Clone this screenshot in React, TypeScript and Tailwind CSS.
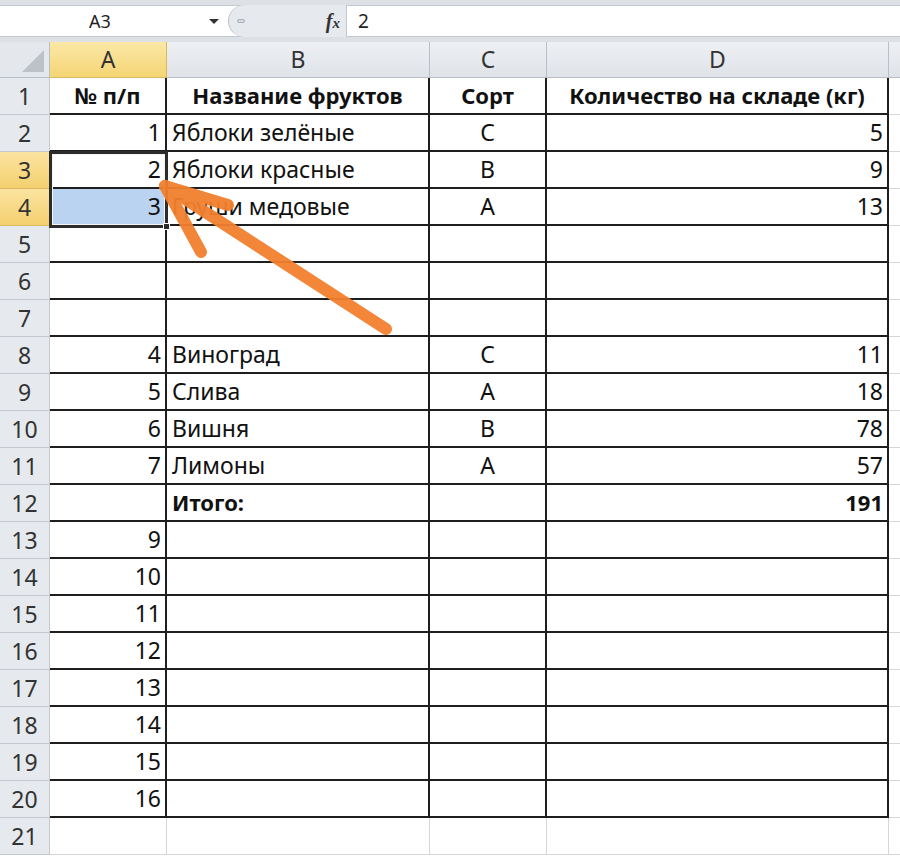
import React from 'react';

type Row = { a?: string; b?: string; c?: string; d?: string; bold?: boolean };

const rows: Row[] = [
  { a: '№ п/п', b: 'Название фруктов', c: 'Сорт', d: 'Количество на складе (кг)', bold: true },
  { a: '1', b: 'Яблоки зелёные', c: 'С', d: '5' },
  { a: '2', b: 'Яблоки красные', c: 'В', d: '9' },
  { a: '3', b: 'Груши медовые', c: 'А', d: '13' },
  {},
  {},
  {},
  { a: '4', b: 'Виноград', c: 'С', d: '11' },
  { a: '5', b: 'Слива', c: 'А', d: '18' },
  { a: '6', b: 'Вишня', c: 'В', d: '78' },
  { a: '7', b: 'Лимоны', c: 'А', d: '57' },
  { b: 'Итого:', d: '191', bold: true },
  { a: '9' },
  { a: '10' },
  { a: '11' },
  { a: '12' },
  { a: '13' },
  { a: '14' },
  { a: '15' },
  { a: '16' },
];

const font = { fontFamily: '"Noto Sans", "Open Sans", sans-serif' };

const App: React.FC = () => {
  const tableCell = 'h-[37px] border-b-2 border-r-2 border-[#1e1e1e] flex items-center text-[#111] overflow-hidden whitespace-nowrap';
  const emptyCell = 'h-[37px] border-b border-r border-[#d6d6d6]';

  return (
    <div className="w-[900px] h-[856px] overflow-hidden bg-white" style={font}>
      {/* Formula bar */}
      <div className="h-[42px] bg-[#dde1e6] pt-[5px] pb-[5px]">
        <div className="h-[32px] bg-white border-t border-b border-[#c2c8d0] flex items-center">
          <div className="w-[200px] text-center text-[18px] text-[#222]">A3</div>
          <div className="w-[28px] flex items-center justify-center">
            <div className="w-0 h-0 border-l-[5px] border-r-[5px] border-t-[5px] border-l-transparent border-r-transparent border-t-[#333]" />
          </div>
          <div className="w-[118px] h-[32px] bg-[#e6e9ed] rounded-l-[16px] border-l border-[#b8bec6] flex items-center justify-between pl-[8px] pr-[6px]">
            <div className="w-[8px] h-[4px] rounded-[2px] border border-[#aab0b8] bg-[#d8dce1]" />
            <span className="italic text-[20px] text-[#333] font-bold" style={{ fontFamily: '"Liberation Serif", serif' }}>
              f<span className="text-[15px]">x</span>
            </span>
          </div>
          <div className="w-px h-[32px] bg-[#c2c8d0]" />
          <div className="pl-[11px] text-[19px] text-[#222]">2</div>
        </div>
      </div>

      {/* Grid */}
      <div className="relative">
        <div className="grid grid-cols-[50px_117px_263px_117px_342px_11px]">
          {/* Column headers */}
          <div className="h-[36px] bg-[#e4e7eb] border-r border-b border-[#b9bfc7] flex items-end justify-end pr-[5px] pb-[5px]">
            <div className="w-0 h-0 border-l-[22px] border-b-[22px] border-l-transparent border-b-[#bdc2c8]" />
          </div>
          <div className="h-[36px] bg-gradient-to-b from-[#fbe8a6] to-[#f5d574] border-r border-b border-[#d8b860] flex items-center justify-center text-[23px] text-[#333]">A</div>
          {['B', 'C', 'D'].map((l) => (
            <div key={l} className="h-[36px] bg-gradient-to-b from-[#eef0f3] to-[#dfe3e8] border-r border-b border-[#b9bfc7] flex items-center justify-center text-[23px] text-[#333]">{l}</div>
          ))}
          <div className="h-[36px] bg-gradient-to-b from-[#eef0f3] to-[#dfe3e8] border-b border-[#b9bfc7]" />

          {rows.map((r, i) => {
            const n = i + 1;
            const sel = n === 3 || n === 4;
            const size = r.bold ? 'text-[22px] font-bold' : 'text-[23px]';
            return (
              <React.Fragment key={n}>
                <div className={`h-[37px] border-r border-b flex items-center justify-center text-[23px] text-[#333] ${sel ? 'bg-gradient-to-b from-[#fbe3a0] to-[#f4d06e] border-[#d8b860]' : 'bg-[#e6e9ed] border-[#c3c8cf]'}`}>{n}</div>
                <div className={`${tableCell} ${size} ${n === 1 ? 'justify-center' : 'justify-end pr-[4px]'} ${n === 4 ? 'bg-[#bad3f1]' : ''}`}>{r.a}</div>
                <div className={`${tableCell} ${size} ${n === 1 ? 'justify-center' : 'justify-start pl-[5px]'}`}>{r.b}</div>
                <div className={`${tableCell} ${size} justify-center`}>{r.c}</div>
                <div className={`${tableCell} ${size} ${n === 1 ? 'justify-center' : 'justify-end pr-[4px]'}`}>{r.d}</div>
                <div className="h-[37px] border-b border-[#d6d6d6]" />
              </React.Fragment>
            );
          })}

          {/* Row 21 */}
          <div className="h-[37px] bg-[#e6e9ed] border-r border-b border-[#c3c8cf] flex items-center justify-center text-[23px] text-[#333]">21</div>
          <div className={emptyCell} />
          <div className={emptyCell} />
          <div className={emptyCell} />
          <div className={emptyCell} />
          <div className="h-[37px] border-b border-[#d6d6d6]" />
        </div>

        {/* Selection A3:A4 */}
        <div className="absolute left-[49px] top-[109px] w-[119px] h-[77px] border-[3px] border-[#2c2c2c] pointer-events-none">
          <div className="w-full h-full border border-[#f4f4f4]" />
          <div className="absolute -right-[5px] -bottom-[5px] w-[7px] h-[7px] bg-[#2c2c2c] border border-white" />
        </div>

        {/* Orange arrow */}
        <svg className="absolute left-0 top-0 pointer-events-none" width="900" height="814" viewBox="0 42 900 814">
          <g stroke="#f2802e" strokeWidth="12" strokeLinecap="round" strokeLinejoin="round" fill="none" opacity="0.95">
            <path d="M386 329 L165 186" />
            <path d="M165 186 L201 252" />
            <path d="M165 186 L228 205" />
          </g>
        </svg>
      </div>
    </div>
  );
};

export default App;
